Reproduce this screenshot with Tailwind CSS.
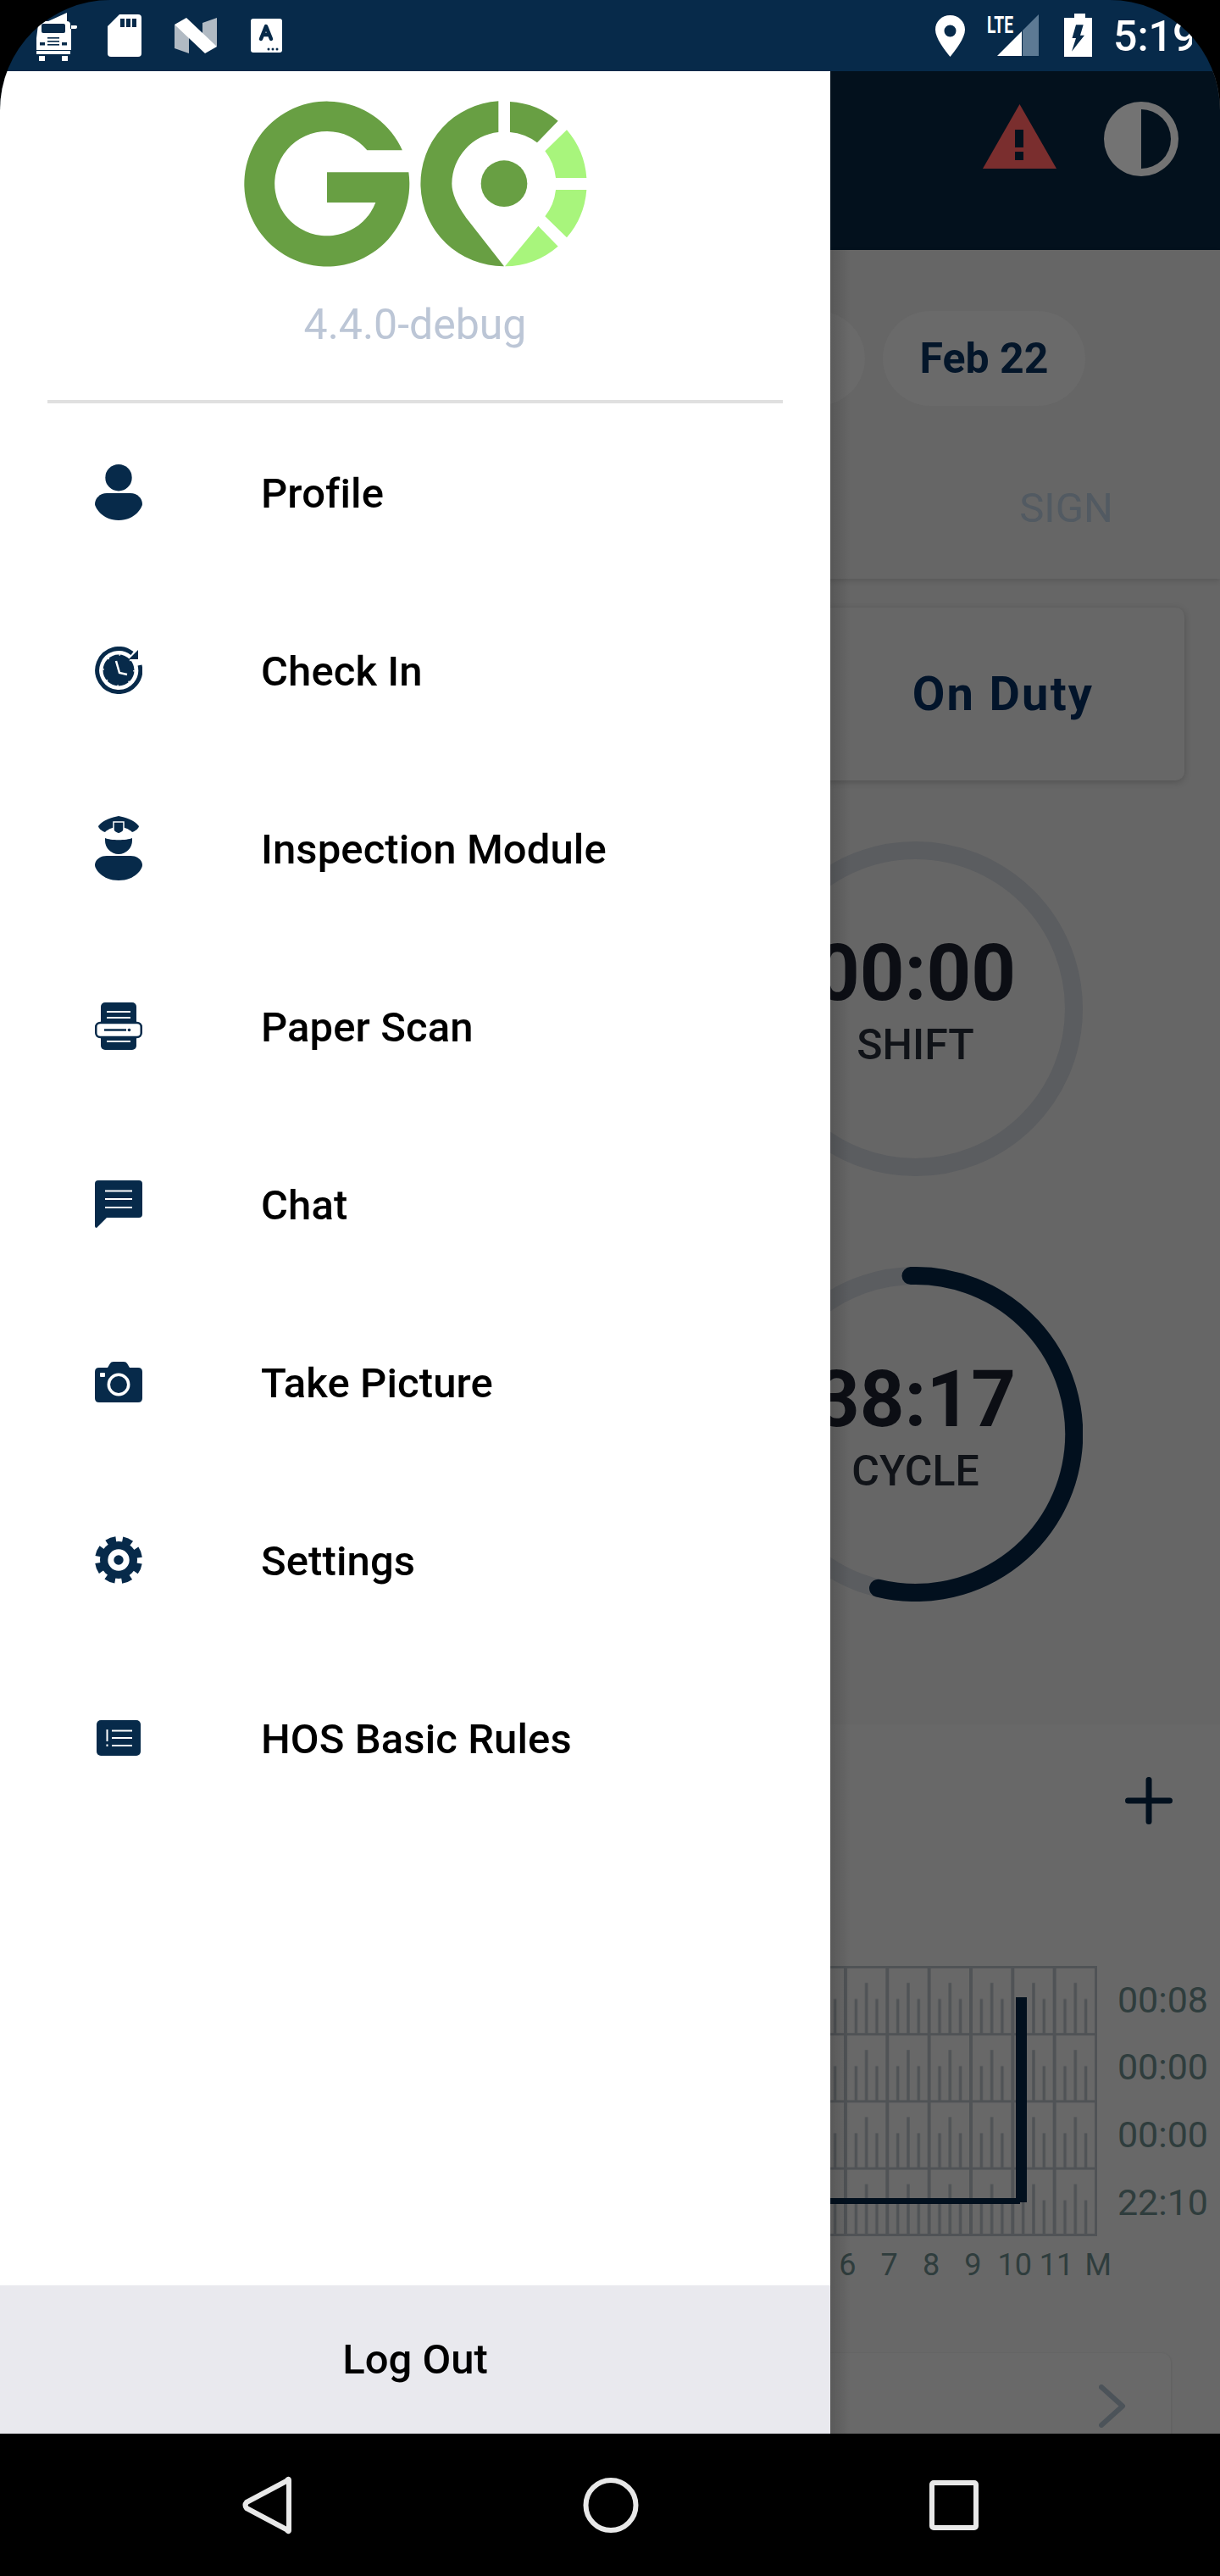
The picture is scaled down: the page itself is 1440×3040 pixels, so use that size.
<!DOCTYPE html>
<html lang="en">
<head>
    <meta charset="UTF-8">
    <meta name="viewport" content="width=device-width, initial-scale=1.0">
    <title>GO - Menu</title>
    <script src="https://cdn.jsdelivr.net/npm/@tailwindcss/browser@4"></script>
</head>
<body class="bg-black font-['Roboto',sans-serif]">
<div class="w-[1440px] h-[3040px] flex flex-col bg-black">

    <div class="h-[2872px] flex flex-col overflow-hidden rounded-t-[130px]">

        <!-- Status bar -->
        <div class="h-[84px] shrink-0 flex justify-between bg-[#072a4a]">
            <div class="flex items-start pl-[43px] pt-[15px]">
                <svg class="w-[48px] h-[57px]" viewBox="0 0 48 57" fill="#fff">
                    <path d="M14 10 L36 0 V10 Z"/>
                    <path d="M2 14 Q2 10 6 10 H36 Q40 10 40 14 V19 H46 Q48 19 48 17 V16 Q48 15 46 15 H41 V44 H0 V30 Z"/>
                    <rect x="6" y="13" width="28" height="11" rx="2" fill="#072a4a"/>
                    <rect x="4" y="35" width="6" height="3.5" fill="#072a4a"/>
                    <rect x="30" y="35" width="6" height="3.5" fill="#072a4a"/>
                    <rect x="13" y="29" width="14" height="1.6" fill="#072a4a"/>
                    <rect x="13" y="33" width="14" height="1.6" fill="#072a4a"/>
                    <rect x="13" y="37" width="14" height="1.6" fill="#072a4a"/>
                    <rect x="0" y="45" width="40" height="4"/>
                    <rect x="3" y="51" width="7" height="6"/>
                    <rect x="30" y="51" width="7" height="6"/>
                </svg>
                <svg class="w-[40px] h-[50px] ml-[36px] mt-[2px]" viewBox="0 0 40 50" fill="#fff">
                    <path d="M14 0 H36 Q40 0 40 4 V46 Q40 50 36 50 H4 Q0 50 0 46 V14 Z"/>
                    <rect x="15" y="5" width="5" height="10" fill="#072a4a"/>
                    <rect x="22" y="5" width="5" height="10" fill="#072a4a"/>
                    <rect x="29" y="5" width="5" height="10" fill="#072a4a"/>
                </svg>
                <svg class="w-[50px] h-[42px] ml-[39px] mt-[6px]" viewBox="0 0 50 42">
                    <path d="M0 8 L17 19 V42 L0 36 Z" fill="#b1bac3"/>
                    <path d="M33 6 L50 0 V34 L33 23 Z" fill="#b1bac3"/>
                    <path d="M0 8 L14 0 L50 34 L36 42 Z" fill="#fff"/>
                </svg>
                <svg class="w-[37px] h-[40px] ml-[40px] mt-[7px]" viewBox="0 0 37 40">
                    <rect width="37" height="40" rx="3" fill="#fff"/>
                    <path d="M12 24 L18 9 L24 24 M14 19 H22" fill="none" stroke="#072a4a" stroke-width="4.5" stroke-linecap="round" stroke-linejoin="round"/>
                    <circle cx="21" cy="36" r="1.5" fill="#072a4a"/>
                    <circle cx="26" cy="36" r="1.5" fill="#072a4a"/>
                    <circle cx="31" cy="36" r="1.5" fill="#072a4a"/>
                </svg>
            </div>
            <div class="flex items-start pt-[16px] pr-[33px]">
                <svg class="w-[35px] h-[49px] mt-[2px]" viewBox="0 0 35 49">
                    <path fill-rule="evenodd" fill="#fff" d="M17.5 0 C27.5 0 35 7.5 35 17 C35 27 24 41 17.5 49 C11 41 0 27 0 17 C0 7.5 7.5 0 17.5 0 Z M17.5 11.5 A7 7 0 1 0 17.5 25.5 A7 7 0 1 0 17.5 11.5 Z"/>
                </svg>
                <svg class="w-[61px] h-[51px] ml-[26px] overflow-visible" viewBox="0 0 61 51">
                    <text x="0" y="23" font-family="Roboto" font-weight="700" font-size="28" fill="#fff" textLength="31" lengthAdjust="spacingAndGlyphs">LTE</text>
                    <path d="M12 50 L41 21 V50 Z" fill="#fff"/>
                    <path d="M42 20 L61 1 V50 H42 Z" fill="#5d7a94"/>
                </svg>
                <svg class="w-[33px] h-[51px] ml-[30px]" viewBox="0 0 33 51" fill="#fff">
                    <rect x="12" y="0" width="13" height="6"/>
                    <rect x="0" y="5" width="33" height="46"/>
                    <path d="M14 13.300 H22.700 L19 25.700 H24 L9 44.700 L14 29 H9.500 Z" fill="#072a4a"/>
                </svg>
                <div class="w-[93px] ml-[25px] overflow-hidden text-[50px] leading-[54px] font-medium text-white whitespace-nowrap">5:19</div>
            </div>
        </div>

        <div class="relative h-[2788px] shrink-0">

            <!-- App behind the drawer, dimmed -->
            <div class="h-full flex flex-col bg-[#666666] overflow-hidden">
                <div class="h-[211px] shrink-0 flex justify-end items-start bg-[#03111d] pt-[36px] pr-[49px]">
                    <svg class="w-[87px] h-[76px] mt-[3px]" viewBox="0 0 87 76">
                        <path d="M43.500 0 L87 76 H0 Z" fill="#7a2e2e"/>
                        <rect x="38" y="30" width="10" height="21" fill="#03111d"/>
                        <rect x="38" y="56" width="10" height="10" fill="#03111d"/>
                    </svg>
                    <svg class="w-[88px] h-[88px] ml-[56px]" viewBox="0 0 88 88">
                        <circle cx="44" cy="44" r="44" fill="#737373"/>
                        <path d="M44 9 A35 35 0 0 1 44 79 Z" fill="#03111d"/>
                    </svg>
                </div>

                <div class="h-[388px] shrink-0 flex flex-col shadow-[0_3px_6px_rgba(0,0,0,0.12)]">
                    <div class="flex justify-end gap-[21px] pt-[72px] pr-[159px]">
                        <div class="w-[240px] h-[112px] rounded-full bg-[#6a6a6a]"></div>
                        <div class="w-[239px] h-[112px] rounded-full bg-[#6a6a6a] flex items-center justify-center text-[50px] font-bold text-[#04162a]">Feb 22</div>
                    </div>
                    <div class="flex justify-end pr-[126px] mt-[93px] text-[49px] leading-[56px] text-[#525a62]">SIGN</div>
                </div>

                <div class="w-[428px] h-[204px] shrink-0 self-end mr-[42px] mt-[34px] rounded-[10px] bg-[#676767] shadow-[0_2px_8px_rgba(0,0,0,0.2)] flex items-center justify-center text-[56px] font-bold tracking-[0.04em] text-[#02142a]">On Duty</div>

                <!-- Shift -->
                <div class="relative w-[395px] h-[395px] shrink-0 self-end mr-[162px] mt-[72px] flex flex-col items-center justify-center pb-[20px]">
                    <svg class="absolute inset-0" viewBox="0 0 395 395">
                        <circle cx="197.500" cy="197.500" r="187" fill="none" stroke="#5b5d60" stroke-width="21"/>
                    </svg>
                    <div class="text-[92px] leading-[96px] font-bold text-[#0c0e14]">00:00</div>
                    <div class="mt-2 text-[50px] leading-[56px] font-medium text-[#101318]">SHIFT</div>
                </div>

                <!-- Cycle -->
                <div class="relative w-[395px] h-[395px] shrink-0 self-end mr-[162px] mt-[107px] flex flex-col items-center justify-center pb-[18px]">
                    <svg class="absolute inset-0" viewBox="0 0 395 395">
                        <circle cx="197.500" cy="197.500" r="187" fill="none" stroke="#5b5d60" stroke-width="21"/>
                        <path d="M192 10.600 A187 187 0 1 1 153.500 379.200" fill="none" stroke="#02101e" stroke-width="21" stroke-linecap="round"/>
                    </svg>
                    <div class="text-[92px] leading-[96px] font-bold text-[#0c0e14]">38:17</div>
                    <div class="mt-2 text-[50px] leading-[56px] font-medium text-[#101318]">CYCLE</div>
                </div>

                <!-- Logs section -->
                <div class="flex-1 flex flex-col mt-[145px] pt-[62px] bg-[#686868]">
                    <svg class="w-[56px] h-[56px] shrink-0 self-end mr-[56px]" viewBox="0 0 56 56">
                        <path d="M3.500 28 H52.500 M28 3.500 V52.500" stroke="#02101e" stroke-width="7" stroke-linecap="round"/>
                    </svg>

                    <div class="flex justify-end shrink-0 mt-[167px] pr-[14px]">
                        <svg class="w-[317px] h-[319px]" viewBox="0 0 317 319">
                            <defs>
                                <pattern id="logGrid" x="18" y="0" width="49.330" height="79.200" patternUnits="userSpaceOnUse">
                                    <rect x="0" y="0" width="4" height="79.200" fill="#505356"/>
                                    <rect x="0" y="0" width="49.330" height="3" fill="#505356"/>
                                    <rect x="12.600" y="39" width="3.500" height="41" fill="#505356"/>
                                    <rect x="24.900" y="20" width="3.500" height="60" fill="#505356"/>
                                    <rect x="37.200" y="39" width="3.500" height="41" fill="#505356"/>
                                </pattern>
                            </defs>
                            <rect width="317" height="319" fill="url(#logGrid)"/>
                            <rect x="314" width="3" height="319" fill="#505356"/>
                            <rect y="316" width="317" height="3" fill="#505356"/>
                            <rect x="0" y="274" width="226" height="7" fill="#02101e"/>
                            <rect x="221" y="37" width="13" height="242" fill="#02101e"/>
                        </svg>
                        <div class="ml-[24px] grid grid-rows-4 h-[319px] text-[43px] text-[#2f3d3d] items-center">
                            <div>00:08</div>
                            <div>00:00</div>
                            <div>00:00</div>
                            <div>22:10</div>
                        </div>
                    </div>

                    <div class="flex justify-end shrink-0 mt-[12px] mr-[119px] text-[36px] leading-[44px] text-[#2f3d3d] text-center">
                        <div class="w-[49.330px]">6</div>
                        <div class="w-[49.330px]">7</div>
                        <div class="w-[49.330px]">8</div>
                        <div class="w-[49.330px]">9</div>
                        <div class="w-[49.330px]">10</div>
                        <div class="w-[49.330px]">11</div>
                        <div class="w-[49.330px]">M</div>
                    </div>

                    <div class="w-[430px] h-[140px] shrink-0 self-end mr-[58px] mt-[82px] rounded-[10px] bg-[#696969] shadow-[0_1px_3px_rgba(0,0,0,0.15)] flex justify-end pt-[37px] pr-[53px]">
                        <svg class="w-[32px] h-[51px]" viewBox="0 0 32 51">
                            <path d="M3 3 L28 25.500 L3 48" fill="none" stroke="#4c5359" stroke-width="6" stroke-linecap="round" stroke-linejoin="round"/>
                        </svg>
                    </div>
                </div>
            </div>

            <!-- Navigation drawer -->
            <div class="absolute left-0 top-0 bottom-0 w-[980px] flex flex-col bg-white">
                <div class="absolute left-full top-[211px] bottom-0 w-[24px] bg-linear-to-r from-black/15 to-transparent"></div>

                <div class="flex flex-col items-center pt-[16px]">
                    <svg class="w-[440px] h-[240px]" viewBox="0 0 1320 720">
                        <path fill="#689f43" d="M614.500 232 A292.500 292.500 0 1 0 637 310 H348 V417 H520 A185 185 0 1 1 490 232 Z"/>
                        <path fill="#689f43" d="M955 58 A292.500 292.500 0 0 0 975 642.500 L840 470 Q790 400 790 350 A185 185 0 0 1 955 168 Z"/>
                        <path fill="#689f43" d="M996 60 A292 292 0 0 1 1166 128 L1092 205 A185 185 0 0 0 996 168 Z"/>
                        <circle cx="975" cy="350" r="82" fill="#689f43"/>
                        <path fill="#a8f57c" d="M1197 160 A292 292 0 0 1 1267 330 H1158 A185 185 0 0 0 1120 235 Z"/>
                        <path fill="#a8f57c" d="M1267 372 A292 292 0 0 1 1197 541 L1120 466 A185 185 0 0 0 1158 372 Z"/>
                        <path fill="#a8f57c" d="M1096 500 L1166 572 A292 292 0 0 1 978 643 Z"/>
                    </svg>
                    <div class="mt-[15px] text-[50px] leading-[56px] text-[#bcc6d6]">4.4.0-debug</div>
                </div>

                <div class="h-[4px] mx-[56px] mt-[61px] shrink-0 bg-[#e0e0e0]"></div>

                <div class="flex flex-col text-[49px] tracking-[0.1px] font-medium text-black">
                    <div class="h-[210px] flex items-center">
                        <div class="w-[56px] ml-[112px] mr-[140px] flex justify-center">
                            <svg class="w-[56px] h-[66px]" viewBox="0 0 56 66" fill="#072a4a">
                                <circle cx="28" cy="15.700" r="15.700"/>
                                <path d="M14 34 H42 C50 34 56 40 56 47 C56 50 48 66 28 66 C8 66 0 50 0 47 C0 40 6 34 14 34 Z"/>
                            </svg>
                        </div>
                        <span class="pt-[3px]">Profile</span>
                    </div>
                    <div class="h-[210px] flex items-center">
                        <div class="w-[56px] ml-[112px] mr-[140px] flex justify-center">
                            <svg class="w-[56px] h-[56px]" viewBox="0 0 56 56">
                                <path d="M44 8 A25.500 25.500 0 1 0 53 22" fill="none" stroke="#072a4a" stroke-width="5"/>
                                <path d="M51 4 V15 H40 Z" fill="#072a4a"/>
                                <circle cx="28" cy="28" r="18.500" fill="#072a4a"/>
                                <circle cx="28" cy="28" r="18" fill="none" stroke="#fff" stroke-width="1.500" stroke-dasharray="1.500 12.640"/>
                                <path d="M25 17 L29 31 L38 33" fill="none" stroke="#fff" stroke-width="2.500"/>
                            </svg>
                        </div>
                        <span class="pt-[3px]">Check In</span>
                    </div>
                    <div class="h-[210px] flex items-center">
                        <div class="w-[56px] ml-[112px] mr-[140px] flex justify-center">
                            <svg class="w-[56px] h-[76px]" viewBox="0 0 56 76" fill="#072a4a">
                                <path d="M28 0 C36 2 46 4 52 12 C52 14 48 18 44 19 C40 15 34 13 28 13 C22 13 16 15 12 19 C8 18 4 14 4 12 C10 4 20 2 28 0 Z"/>
                                <path d="M22 7 H34 V16 Q34 19 28 21 Q22 19 22 16 Z" fill="#072a4a" stroke="#fff" stroke-width="1.500"/>
                                <path d="M12 26 C18 29 38 29 44 26 V29 A16 16 0 0 1 12 29 Z"/>
                                <path d="M14 47 H42 C50 47 56 52 56 58 C56 62 48 76 28 76 C8 76 0 62 0 58 C0 52 6 47 14 47 Z"/>
                            </svg>
                        </div>
                        <span class="pt-[3px]">Inspection Module</span>
                    </div>
                    <div class="h-[210px] flex items-center">
                        <div class="w-[56px] ml-[112px] mr-[140px] flex justify-center">
                            <svg class="w-[56px] h-[56px]" viewBox="0 0 56 56">
                                <rect x="7" y="0" width="42" height="56" rx="5" fill="#072a4a"/>
                                <path d="M14 11 H42 M14 18 H42 M14 46 H42" stroke="#fff" stroke-width="2.200"/>
                                <rect x="1.250" y="24" width="53.500" height="17" rx="5" fill="#fff" stroke="#072a4a" stroke-width="2.500"/>
                                <path d="M11 32.500 H37" stroke="#072a4a" stroke-width="2.500"/>
                                <circle cx="40.500" cy="32.500" r="1.800" fill="#072a4a"/>
                            </svg>
                        </div>
                        <span class="pt-[3px]">Paper Scan</span>
                    </div>
                    <div class="h-[210px] flex items-center">
                        <div class="w-[56px] ml-[112px] mr-[140px] flex justify-center">
                            <svg class="w-[56px] h-[56px]" viewBox="0 0 56 56">
                                <path d="M4 0 H52 A4 4 0 0 1 56 4 V40 A4 4 0 0 1 52 44 H14 L2 56 Q0 56 0 54 V4 A4 4 0 0 1 4 0 Z" fill="#072a4a"/>
                                <path d="M12 12.500 H44 M12 22 H44 M12 32 H44" stroke="#fff" stroke-width="2"/>
                            </svg>
                        </div>
                        <span class="pt-[3px]">Chat</span>
                    </div>
                    <div class="h-[210px] flex items-center">
                        <div class="w-[56px] ml-[112px] mr-[140px] flex justify-center">
                            <svg class="w-[56px] h-[48px]" viewBox="0 0 56 48">
                                <path d="M5 7 H15 L18 2 Q19 0 22 0 H34 Q37 0 38 2 L41 7 H51 Q56 7 56 12 V43 Q56 48 51 48 H5 Q0 48 0 43 V12 Q0 7 5 7 Z" fill="#072a4a"/>
                                <circle cx="28" cy="27" r="11.700" fill="none" stroke="#fff" stroke-width="3.500"/>
                                <rect x="6" y="13" width="6" height="5" rx="1" fill="#fff"/>
                            </svg>
                        </div>
                        <span class="pt-[3px]">Take Picture</span>
                    </div>
                    <div class="h-[210px] flex items-center">
                        <div class="w-[56px] ml-[112px] mr-[140px] flex justify-center">
                            <svg class="w-[56px] h-[56px]" viewBox="0 0 56 56">
                                <circle cx="28" cy="28" r="22" fill="#072a4a"/>
                                <circle cx="28" cy="28" r="24" fill="none" stroke="#072a4a" stroke-width="8" stroke-dasharray="11 7.850" stroke-dashoffset="-3.920"/>
                                <circle cx="28" cy="28" r="9.200" fill="none" stroke="#fff" stroke-width="7"/>
                            </svg>
                        </div>
                        <span class="pt-[3px]">Settings</span>
                    </div>
                    <div class="h-[210px] flex items-center">
                        <div class="w-[56px] ml-[112px] mr-[140px] flex justify-center">
                            <svg class="w-[52px] h-[42px]" viewBox="0 0 52 42">
                                <rect width="52" height="42" rx="5" fill="#072a4a"/>
                                <path d="M18 12.500 H42 M18 21 H42 M18 30 H42" stroke="#fff" stroke-width="1.800"/>
                                <path d="M12.500 11 V25 M12.500 28.500 V31" stroke="#fff" stroke-width="2"/>
                            </svg>
                        </div>
                        <span class="pt-[3px]">HOS Basic Rules</span>
                    </div>
                </div>

                <div class="mt-auto h-[175px] shrink-0 flex items-center justify-center bg-[#e9e9ee] text-[49px] font-medium text-black">Log Out</div>
            </div>
        </div>
    </div>

    <!-- Android nav bar -->
    <div class="h-[168px] flex justify-center items-start relative bg-black">
        <svg class="w-[1440px] h-[168px]" viewBox="0 0 1440 168" fill="none" stroke="#e8e8e8" stroke-width="6">
            <path d="M341 55 V114 Q341 117 338 113 L291 88 Q288 84.500 291 81 L338 56 Q341 52 341 55 Z" stroke-linejoin="round"/>
            <circle cx="721" cy="84.500" r="29.500"/>
            <rect x="1100" y="58" width="52" height="53" rx="2"/>
        </svg>
    </div>
</div>
</body>
</html>
